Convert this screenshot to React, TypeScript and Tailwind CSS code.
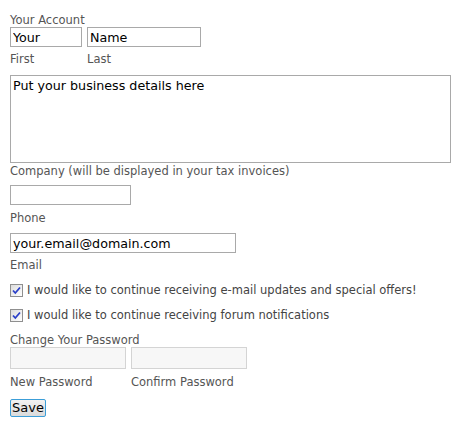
const Check = () => (
    <span className="relative inline-block w-[13px] h-[13px] border border-[#8f8f8f] bg-gradient-to-br from-[#dcdcdc] to-[#ffffff] shrink-0">
        <svg width="11" height="11" viewBox="0 0 11 11" className="absolute left-0 top-0">
            <path d="M2 5.5 L4.3 8 L9 2.5" fill="none" stroke="#2a3fc8" strokeWidth="1.8" />
        </svg>
    </span>
);

const App = () => {
    const label = "text-[11.5px] leading-[15px] text-[#555]";
    const field = "h-[20px] border border-[#a9a9a9] bg-white px-[2px] text-[12.7px] text-black outline-none";

    return (
        <div className="pl-[10px] pt-[11px] bg-white min-h-[426px]" style={{ fontFamily: '"DejaVu Sans", Verdana, sans-serif' }}>
            <div className="text-[11.5px] h-[15px] leading-[19px] text-[#555]">Your Account</div>
            <div className="flex gap-[5px] mt-[1px]">
                <input className={`${field} w-[72px]`} defaultValue="Your" />
                <input className={`${field} w-[114px]`} defaultValue="Name" />
            </div>
            <div className={`flex mt-[5px] ${label}`}>
                <span className="w-[77px]">First</span>
                <span>Last</span>
            </div>
            <textarea
                className="block mt-[8px] w-[441px] h-[88px] border border-[#a9a9a9] px-[2px] py-0 text-[12.7px] text-black resize-none outline-none"
                defaultValue="Put your business details here"
            />
            <div className={`${label} mt-[1px]`}>Company (will be displayed in your tax invoices)</div>
            <input className={`${field} block mt-[6px] w-[121px]`} />
            <div className={`${label} mt-[6px]`}>Phone</div>
            <input className={`${field} block mt-[7px] w-[226px]`} defaultValue="your.email@domain.com" />
            <div className={`${label} mt-[5px]`}>Email</div>
            <label className="flex items-center gap-[4px] mt-[11px] h-[13px] text-[11.5px] text-[#444]">
                <Check />
                <span>I would like to continue receiving e-mail updates and special offers!</span>
            </label>
            <label className="flex items-center gap-[4px] mt-[12px] h-[13px] text-[11.5px] text-[#444]">
                <Check />
                <span>I would like to continue receiving forum notifications</span>
            </label>
            <div className={`${label} mt-[11px]`}>Change Your Password</div>
            <div className="flex gap-[5px] -mt-px">
                <input type="password" className="w-[116px] h-[22px] border border-[#d4d4d4] bg-[#f7f7f7] outline-none" />
                <input type="password" className="w-[116px] h-[22px] border border-[#d4d4d4] bg-[#f7f7f7] outline-none" />
            </div>
            <div className={`flex mt-[6px] ${label}`}>
                <span className="w-[121px]">New Password</span>
                <span>Confirm Password</span>
            </div>
            <button className="mt-[9px] h-[18px] px-[1px] border border-[#3c9ed8] rounded-[2px] bg-gradient-to-b from-[#f2f2f2] to-[#dadada] text-[13px] leading-[14px] text-black">
                Save
            </button>
        </div>
    );
};

export default App;
